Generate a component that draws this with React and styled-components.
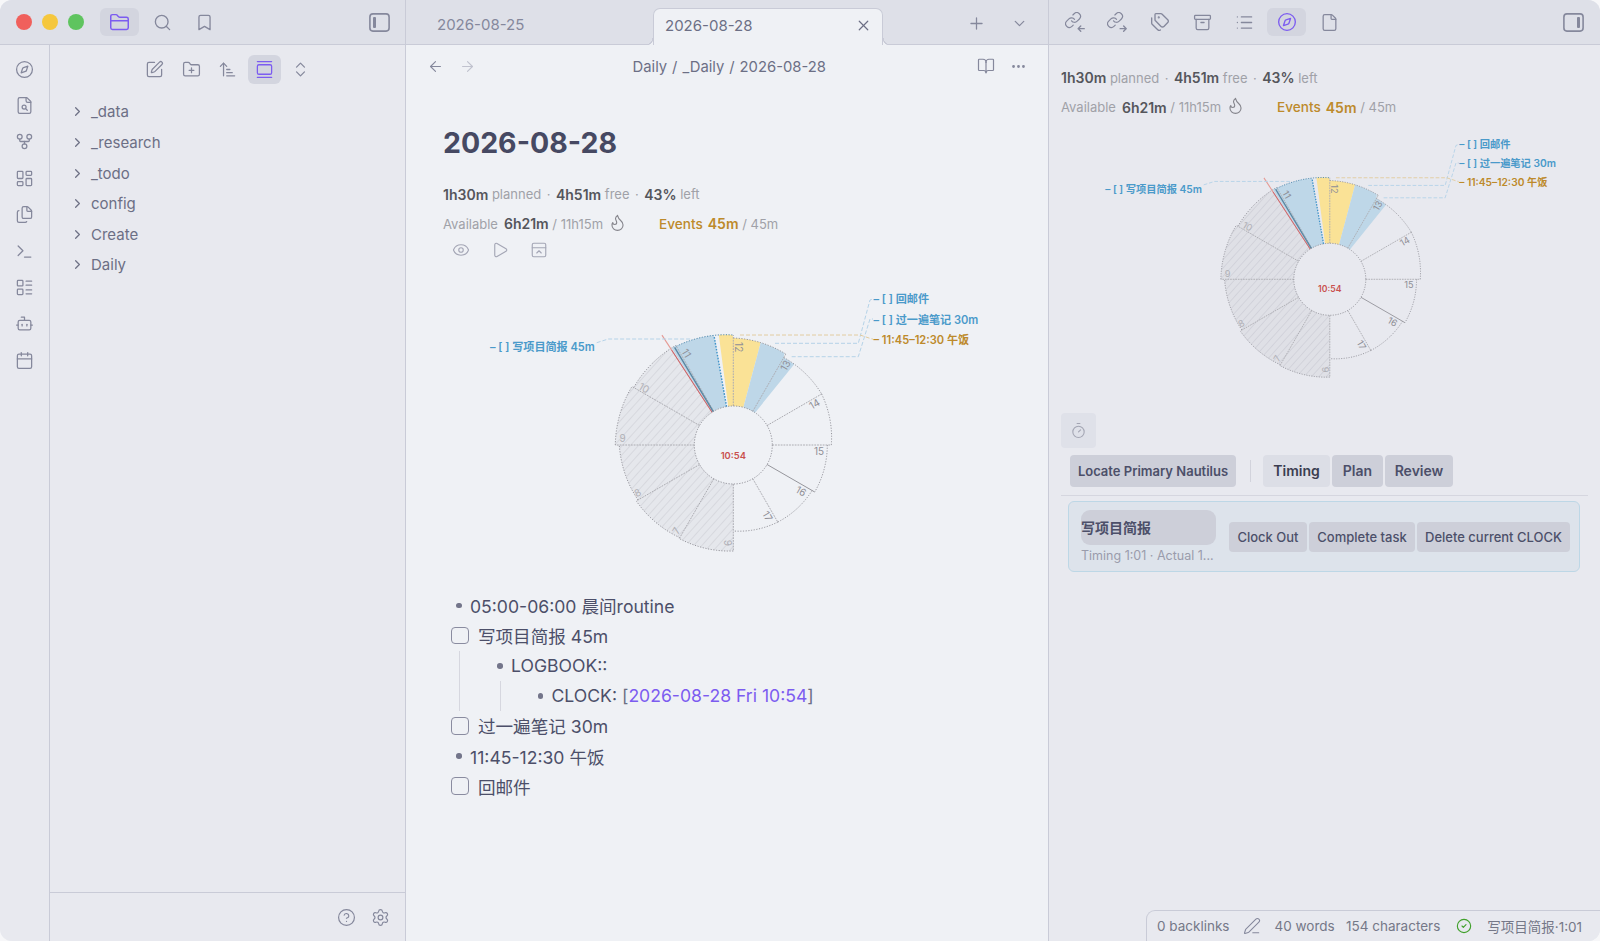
import React from 'react';
import styled, { createGlobalStyle } from 'styled-components';
import {
  FolderClosed, Search, Bookmark, Compass, GitFork, LayoutDashboard, Files, Terminal,
  LayoutList, Bot, Calendar, SquarePen, FolderPlus, ArrowUpNarrowWide, GalleryVertical, ChevronsUpDown,
  ChevronRight, ChevronDown, X, Plus, ArrowLeft, ArrowRight, BookOpen, Ellipsis, Flame, Eye, Play,
  PanelTopClose, Tags, Archive, List, File, Timer, PenLine, CircleCheck, CircleHelp, Settings,
} from 'lucide-react';

const Global = createGlobalStyle`
  html, body { margin: 0; padding: 0; background: #f7f7f9; }
  body { font-family: Inter, "Noto Sans CJK SC", sans-serif; overflow: hidden; }
  * { box-sizing: border-box; }
`;

const C = {
  base: '#eff1f5', side: '#e8e9ef', top: '#dee0e8', line: '#c9cbd7', surf: '#cdcfd9',
  text: '#4c4f69', sub: '#6c6f85', icon: '#85889c', purple: '#7c5cf0', amber: '#bd8a2b', blue: '#4a9aca',
};

const Win = styled.div`
  position: relative; display: flex; width: 1600px; height: 941px; overflow: hidden;
  border-radius: 12px; background: ${C.base};
`;
const LeftSplit = styled.div`display: flex; flex-direction: column; width: 406px; background: ${C.side}; border-right: 1px solid ${C.line};`;
const MainSplit = styled.div`display: flex; flex-direction: column; width: 643px; background: ${C.base}; border-right: 1px solid ${C.line};`;
const RightSplit = styled.div`display: flex; flex-direction: column; width: 551px; background: ${C.side};`;

const Header = styled.div`
  display: flex; align-items: center; flex: 0 0 45px; height: 45px; background: ${C.top};
  border-bottom: 1px solid ${C.line}; padding: ${p => p.$pad || '0'};
  gap: ${p => p.$gap || 0}px;
`;
const Lights = styled.div`display: flex; gap: 10px; margin-right: 12.5px; padding-left: 16px;`;
const Light = styled.span`width: 16px; height: 16px; border-radius: 50%; background: ${p => p.$c};`;
const IconBtn = styled.button`
  display: flex; align-items: center; justify-content: center; flex: none; padding: 0; border: 0;
  width: ${p => p.$w || 39}px; height: ${p => p.$h || 28}px; border-radius: 6px;
  background: ${p => (p.$on ? '#d3d5df' : 'transparent')};
  color: ${p => (p.$on ? C.purple : p.$c || C.icon)};
  margin-left: ${p => (p.$push ? 'auto' : '0')};
`;

const LeftBody = styled.div`display: flex; flex: 1; min-height: 0;`;
const Rail = styled.div`display: flex; flex-direction: column; align-items: center; flex: 0 0 50px; padding-top: 6px; border-right: 1px solid ${C.line};`;
const RailBtn = styled.div`display: flex; align-items: center; justify-content: center; height: 36.4px; width: 48px; color: ${C.icon};`;
const Side = styled.div`display: flex; flex-direction: column; flex: 1; min-width: 0;`;
const SideTools = styled.div`display: flex; justify-content: center; gap: 3.5px; padding-top: 10px;`;
const Tree = styled.div`flex: 1; padding-top: 12.6px;`;
const TreeRow = styled.div`
  display: flex; align-items: center; height: 30.6px; padding-left: 20px; gap: 6px;
  font-size: 15px; color: ${C.sub};
`;
const SideFoot = styled.div`display: flex; justify-content: flex-end; align-items: center; gap: 4px; height: 49px; padding-right: 10px; border-top: 1px solid ${C.line};`;

const Tabs = styled(Header)`align-items: flex-end; padding-right: 17px;`;
const Tab = styled.div`
  flex: 0 0 247px; height: 36px; display: flex; align-items: center; padding-left: 31px;
  padding-bottom: 3px; font-size: 15px; color: ${C.icon};
`;
const ActiveTab = styled.div`
  position: relative; flex: 0 0 230px; height: 37px; margin-bottom: -1px; display: flex; align-items: center;
  justify-content: space-between; padding: 0 10px 3px 11px; font-size: 15px; color: ${C.sub};
  background: ${C.base}; border: 1px solid ${C.line}; border-bottom: 0; border-radius: 7px 7px 0 0;
  &::before, &::after {
    content: ''; position: absolute; bottom: 0; width: 7px; height: 7px;
  }
  &::before { left: -8px; background: radial-gradient(circle at 0 0, transparent 6.2px, ${C.line} 6.4px, ${C.line} 7.3px, ${C.base} 7.5px); }
  &::after { right: -8px; background: radial-gradient(circle at 100% 0, transparent 6.2px, ${C.line} 6.4px, ${C.line} 7.3px, ${C.base} 7.5px); }
`;
const TabTools = styled.div`display: flex; align-items: center; gap: 19px; margin-left: auto; padding-bottom: 9px;`;
const Nav = styled.div`display: grid; grid-template-columns: 1fr auto 1fr; align-items: center; height: 42px; padding: 0 18px 0 17.5px;`;
const NavGroup = styled.div`display: flex; gap: 8px; justify-content: ${p => p.$end ? 'flex-end' : 'flex-start'};`;
const Crumbs = styled.div`display: flex; gap: 5px; margin-left: 5px; padding-top: 1px; font-size: 14.8px; color: ${C.sub};`;

const Note = styled.div`flex: 1; padding: 36px 0 0 37px;`;
const Title = styled.h1`margin: 0 0 21px; font-size: 28.5px; line-height: 40px; font-weight: 700; color: #464962;`;
const Stat = styled.div`
  display: flex; align-items: center; height: 20px; font-size: 13px; color: #a0a1a8; white-space: pre;
  margin-bottom: 9.5px;
`;
const B = styled.b`font-size: 14px; font-weight: 600; color: ${p => p.$c || '#55565c'};`;
const Amber = styled.span`font-size: 13.6px; font-weight: 500; margin-right: 5px; color: ${C.amber};`;
const Dot = styled.span`margin: 0 5.5px; color: #a0a1a8;`;
const Lead = styled.span`margin-right: 6px;`;
const FlameWrap = styled.span`display: flex; margin: -3px 32px 0 5px; color: #85858c;`;
const Tools = styled.div`display: flex; align-items: center; gap: 21px; height: 20px; padding-left: 9px; margin: -3px 0 20px; color: #a4a6b5;`;
const ChartSlot = styled.div`margin-left: 37px;`;

const Tasks = styled.div`margin-top: 20.5px; font-size: 17.6px; color: ${C.text};`;
const Row = styled.div`display: flex; align-items: center; height: 30.1px; padding-left: ${p => p.$pl || 0}px; white-space: pre;`;
const Marker = styled.span`display: flex; justify-content: flex-end; width: 27px; padding-right: 8.2px;`;
const Bullet = styled.i`display: block; width: 5.6px; height: 5.6px; border-radius: 50%; background: #73758a;`;
const Box = styled.span`
  flex: none; width: 17.5px; height: 17.5px; margin: 0 9px 0 8.4px; border: 1.3px solid #8a8ca0; border-radius: 4px;
`;
const Nest = styled.div`margin-left: ${p => p.$ml}px; border-left: 1px solid #d6d7df;`;
const Link = styled.span`color: ${C.purple};`;
const Bracket = styled.span`color: ${C.sub};`;

const Pane = styled.div`flex: 1; padding: 22.5px 0 0 12px;`;
const SideChart = styled.div`margin: 0 0 18.6px 34.5px; height: 267.7px;`;
const TimerBtn = styled.div`
  display: flex; align-items: center; justify-content: center; width: 35px; height: 35px; margin-bottom: 7px;
  border-radius: 4px; background: #dfe1e9; color: #a3a5b3;
`;
const ActionRow = styled.div`display: flex; align-items: center; gap: 2px; margin-left: 9px; height: 32px;`;
const Btn = styled.div`
  display: flex; align-items: center; justify-content: center; height: ${p => p.$h || 32}px; width: ${p => p.$w}px;
  border-radius: 4px; background: ${p => (p.$light ? '#dcdee6' : C.surf)}; white-space: nowrap;
  font-size: ${p => p.$fs || 13}px; font-weight: ${p => p.$fw || 600}; color: ${p => (p.$light ? '#3b3d50' : C.text)};
`;
const Sep = styled.span`width: 1px; height: 22px; margin: 0 10px 0 12px; background: #d2d3dc;`;
const Rule = styled.div`height: 1px; margin: 8px 12px 5px 0; background: #d5d6df;`;
const Card = styled.div`
  display: flex; align-items: center; width: 512px; height: 71px; margin-left: 7px; padding: 0 9px 0 12px;
  background: #dde3eb; border: 1px solid #bdd7e6; border-radius: 6px;
`;
const CardMain = styled.div`display: flex; flex-direction: column; width: 137px; margin: 2px 13px 0 0;`;
const CardTitle = styled.div`display: flex; align-items: center; height: 35px; padding-bottom: 2px; border-radius: 9px; background: ${C.surf}; font-size: 14px; font-weight: 600; color: ${C.text};`;
const CardSub = styled.div`margin-top: 2px; font-size: 12.5px; line-height: 17px; color: #9a9cab; white-space: nowrap;`;
const CardBtns = styled.div`display: flex; gap: 2px; margin-top: 2px;`;

const Status = styled.div`
  position: absolute; right: 0; bottom: 0; display: flex; align-items: center; width: 454px; height: 31px;
  padding-left: 10px; font-size: 13.5px; color: #757888; background: ${C.side};
  border-top: 1px solid ${C.line}; border-left: 1px solid ${C.line}; border-top-left-radius: 9px; white-space: pre;
`;
const StatusIcon = styled.span`display: flex; margin: ${p => p.$m}; color: ${p => p.$c || C.icon};`;

const LinkArrowIcon = ({ out }) => (
  <svg width="21" height="21" viewBox="0 0 24 24" fill="none" stroke="currentColor" strokeWidth="1.6" strokeLinecap="round" strokeLinejoin="round">
    <g transform="translate(-1 -1) scale(.85)">
      <path d="M10 13a5 5 0 0 0 7.54.54l3-3a5 5 0 0 0-7.07-7.07l-1.72 1.71" />
      <path d="M14 11a5 5 0 0 0-7.54-.54l-3 3a5 5 0 0 0 7.07 7.07l1.71-1.71" />
    </g>
    {out ? <path d="M15 19h7m-3-3 3 3-3 3" /> : <path d="M22 19h-7m3-3-3 3 3 3" />}
  </svg>
);
const SideToggle = ({ right }) => (
  <svg width="21" height="19" viewBox="0 0 21 19" fill="none">
    <rect x=".9" y=".9" width="19.2" height="17.2" rx="3" stroke="currentColor" strokeWidth="1.6" />
    <rect x={right ? 14 : 4} y="4" width="3" height="11" rx="1" fill="currentColor" />
  </svg>
);
const FileFind = ({ size, strokeWidth }) => (
  <svg width={size} height={size} viewBox="0 0 24 24" fill="none" stroke="currentColor" strokeWidth={strokeWidth} strokeLinecap="round" strokeLinejoin="round">
    <path d="M15 2H6a2 2 0 0 0-2 2v16a2 2 0 0 0 2 2h12a2 2 0 0 0 2-2V7Z" />
    <path d="M14 2v4a2 2 0 0 0 2 2h4" />
    <circle cx="11.5" cy="14" r="2.5" />
    <path d="m13.4 15.9 2.1 2.1" />
  </svg>
);

const CX = 253.3, CY = 165, RIN = 39;
const SECT = [[106, 108], [107, 112], [110, 114], [118, 117], [115, 115], [114, 110], [107, 105], [101, 102], [102, 98], [94, 94], [91, 89], [89, 86]];
const rOut = a => {
  const i = Math.min(11, Math.floor((a - 180) / 30));
  const t = (a - 180 - i * 30) / 30;
  return SECT[i][0] + (SECT[i][1] - SECT[i][0]) * t;
};
const pt = (a, r) => {
  const q = (a * Math.PI) / 180;
  return `${(CX + r * Math.sin(q)).toFixed(2)} ${(CY - r * Math.cos(q)).toFixed(2)}`;
};
const ring = (a0, a1, aIn1 = a1) => {
  const p = [`M${pt(a0, RIN)}`];
  const n = Math.max(2, Math.ceil(a1 - a0));
  for (let k = 0; k <= n; k++) {
    const a = Math.min(a0 + ((a1 - a0) * k) / n, a1 - 0.001);
    p.push(`L${pt(a, rOut(a))}`);
  }
  p.push(`L${pt(aIn1, RIN)}`);
  p.push(`A${RIN} ${RIN} 0 ${aIn1 - a0 > 180 ? 1 : 0} 0 ${pt(a0, RIN)}Z`);
  return p.join('');
};
const outerArc = (a0, a1) => {
  const p = [];
  for (let a = a0; a <= a1 - 1; a += 1) p.push(`${p.length ? 'L' : 'M'}${pt(a, rOut(a))}`);
  p.push(`L${pt(a1 - 0.01, rOut(a1 - 0.01))}`);
  return p.join('');
};
const HOUR_LABELS = [
  ['6', 183, 98, -90, 1], ['7', 213.8, 103, -60, 1], ['8', 243.6, 107, -30, 1], ['9', 273.4, 111, 0, 1],
  ['10', 302.8, 106, 30, 1], ['11', 333.2, 103, 60, 0], ['12', 3.3, 98, 90, 0], ['13', 33, 95, -60, 0],
  ['14', 63, 91, -30, 0], ['15', 94, 86, 0, 0], ['16', 124, 82, 30, 0], ['17', 154, 79, 60, 0],
];

const Nautilus = ({ scale = 1, id }) => {
  const hourAngles = Array.from({ length: 12 }, (_, i) => 180 + i * 30);
  return (
    <svg width={520 * scale} height={290 * scale} viewBox="0 0 520 290" style={{ display: 'block' }} fontFamily='Inter, "Noto Sans CJK SC", sans-serif'>
      <defs>
        <pattern id={id} width="6" height="6" patternUnits="userSpaceOnUse" patternTransform="rotate(42)">
          <rect width="6" height="6" fill="#80808f" fillOpacity=".085" />
          <line x1="0" y1="0" x2="0" y2="6" stroke="#80808f" strokeOpacity=".24" strokeWidth="1.2" />
        </pattern>
      </defs>
      <path d={ring(180, 327)} fill={`url(#${id})`} />
      <path d={ring(327.5, 350)} fill="#bed7e8" />
      <path d={ring(352.5, 375)} fill="#fae296" />
      <path d={ring(375, 397, 394)} fill="#bed7e8" />
      {hourAngles.map(a => (
        <path key={a} d={outerArc(a, a + 30)} fill="none" stroke={a === 330 ? '#4f88ac' : '#97979e'} strokeWidth="1" strokeDasharray="1.2 1.5" />
      ))}
      {hourAngles.map(a => {
        const i = (a - 180) / 30;
        const [x1, y1] = pt(a, RIN).split(' ');
        const [x2, y2] = pt(a, Math.max(SECT[i][0], SECT[(i + 11) % 12][1])).split(' ');
        return (
          <line key={a} x1={x1} y1={y1} x2={x2} y2={y2} stroke={a === 480 ? '#96969c' : '#acacb2'} strokeWidth="1" strokeDasharray={a === 480 ? 'none' : '1.8 1'} />
        );
      })}
      <circle cx={CX} cy={CY} r={RIN} fill="none" stroke="#8e8e96" strokeWidth="1" strokeDasharray="1.2 1.5" />
      <path d={`M${pt(327, RIN)}L${pt(327, 131)}`} stroke="#e59a94" strokeWidth="1.1" />
      <path d={`M${pt(327, RIN)}L${pt(327, 113)}`} stroke="#c2606a" strokeWidth=".9" />
      <path d={`M${pt(329, RIN)}L${pt(329, 114)}`} stroke="#5b87a2" strokeWidth="1.4" />
      <path d={`M${pt(350, RIN)}L${pt(350, 110)}`} stroke="#3f93c9" strokeWidth="1.4" strokeDasharray="1.6 1.4" />
      <g fill="none" strokeWidth="1" strokeDasharray="4 2">
        <path d="M116.7 62.7L128.3 59H211.7" stroke="#b5d3e8" />
        <path d="M295 63.3H378.3L390 20L393 19" stroke="#b5d3e8" />
        <path d="M311.7 76.7H378.3L390 39H393" stroke="#b5d3e8" />
        <path d="M260 55H380L392 59H393" stroke="#e2cca0" />
      </g>
      <g fontSize="11.1" fontWeight="600" dominantBaseline="central">
        <text x="10" y="66.7" fill={C.blue}>– [ ] 写项目简报 45m</text>
        <text x="393.5" y="18.8" fill={C.blue}>– [ ] 回邮件</text>
        <text x="393.5" y="39.5" fill={C.blue}>– [ ] 过一遍笔记 30m</text>
        <text x="393.5" y="59.5" fill={C.amber}>– 11:45–12:30 午饭</text>
      </g>
      {HOUR_LABELS.map(([t, a, r, rot, past]) => {
        const [x, y] = pt(a, r).split(' ');
        return (
          <text key={t} x={x} y={y} fontSize="10" textAnchor="middle" dominantBaseline="central" fill={past ? '#b0b0b6' : '#8f8f96'} transform={`rotate(${rot} ${x} ${y})`}>{t}</text>
        );
      })}
      <text x={CX} y={CY + 10.7} fontSize="9.4" fontWeight="600" textAnchor="middle" dominantBaseline="central" fill="#c9504e">10:54</text>
    </svg>
  );
};

const Stats = () => (
  <>
    <Stat>
      <B>1h30m</B> planned<Dot>·</Dot><B>4h51m</B> free<Dot>·</Dot><B>43%</B> left
    </Stat>
    <Stat>
      <Lead>Available</Lead><B>6h21m</B> / 11h15m
      <FlameWrap><Flame size={19} strokeWidth={1.4} /></FlameWrap>
      <Amber>Events</Amber><B $c={C.amber}>45m</B> / 45m
    </Stat>
  </>
);

const railIcons = [Compass, FileFind, GitFork, LayoutDashboard, Files, Terminal, LayoutList, Bot, Calendar];
const folders = ['_data', '_research', '_todo', 'config', 'Create', 'Daily'];

export default function App() {
  return (
    <Win>
      <Global />
      <LeftSplit>
        <Header $pad="0 6px 0 0" $gap={3.5}>
          <Lights>
            <Light $c="#f0605c" /><Light $c="#f5c73d" /><Light $c="#5fc45f" />
          </Lights>
          <IconBtn $on><FolderClosed size={21} strokeWidth={1.7} /></IconBtn>
          <IconBtn><Search size={19} strokeWidth={1.7} /></IconBtn>
          <IconBtn><Bookmark size={19} strokeWidth={1.7} /></IconBtn>
          <IconBtn $push><SideToggle /></IconBtn>
        </Header>
        <LeftBody>
          <Rail>
            {railIcons.map((I, i) => <RailBtn key={i}><I size={19} strokeWidth={1.6} /></RailBtn>)}
          </Rail>
          <Side>
            <SideTools>
              <IconBtn $w={33} $h={29}><SquarePen size={19} strokeWidth={1.6} /></IconBtn>
              <IconBtn $w={33} $h={29}><FolderPlus size={19} strokeWidth={1.6} /></IconBtn>
              <IconBtn $w={33} $h={29}><ArrowUpNarrowWide size={19} strokeWidth={1.6} /></IconBtn>
              <IconBtn $w={33} $h={29} $on><GalleryVertical size={19} strokeWidth={1.6} /></IconBtn>
              <IconBtn $w={33} $h={29}><ChevronsUpDown size={19} strokeWidth={1.6} /></IconBtn>
            </SideTools>
            <Tree>
              {folders.map(f => (
                <TreeRow key={f}><ChevronRight size={15} strokeWidth={2} color="#6f7286" />{f}</TreeRow>
              ))}
            </Tree>
            <SideFoot>
              <IconBtn $w={30}><CircleHelp size={19} strokeWidth={1.5} /></IconBtn>
              <IconBtn $w={30}><Settings size={19} strokeWidth={1.5} /></IconBtn>
            </SideFoot>
          </Side>
        </LeftBody>
      </LeftSplit>

      <MainSplit>
        <Tabs>
          <Tab>2026-08-25</Tab>
          <ActiveTab>2026-08-28<X size={17} strokeWidth={1.7} color="#6c6f85" /></ActiveTab>
          <TabTools>
            <IconBtn $w={24} $h={24}><Plus size={19} strokeWidth={1.6} /></IconBtn>
            <IconBtn $w={24} $h={24}><ChevronDown size={17} strokeWidth={1.7} /></IconBtn>
          </TabTools>
        </Tabs>
        <Nav>
          <NavGroup>
            <IconBtn $w={24} $h={24}><ArrowLeft size={17} strokeWidth={1.6} /></IconBtn>
            <IconBtn $w={24} $h={24} $c="#c0c2ce"><ArrowRight size={17} strokeWidth={1.6} /></IconBtn>
          </NavGroup>
          <Crumbs><span>Daily</span><span>/</span><span>_Daily</span><span>/</span><span>2026-08-28</span></Crumbs>
          <NavGroup $end>
            <IconBtn $w={24} $h={24}><BookOpen size={18} strokeWidth={1.6} /></IconBtn>
            <IconBtn $w={24} $h={24}><Ellipsis size={17} strokeWidth={2} /></IconBtn>
          </NavGroup>
        </Nav>
        <Note>
          <Title>2026-08-28</Title>
          <Stats />
          <Tools>
            <Eye size={18} strokeWidth={1.5} />
            <Play size={18} strokeWidth={1.5} />
            <PanelTopClose size={18} strokeWidth={1.5} />
          </Tools>
          <ChartSlot><Nautilus id="hatchMain" /></ChartSlot>
          <Tasks>
            <Row><Marker><Bullet /></Marker>05:00-06:00 晨间routine</Row>
            <Row><Box />写项目简报 45m</Row>
            <Nest $ml={16}>
              <Row $pl={24}><Marker><Bullet /></Marker>LOGBOOK::</Row>
              <Nest $ml={40}>
                <Row $pl={23.5}><Marker><Bullet /></Marker>CLOCK: <Bracket>[</Bracket><Link>2026-08-28 Fri 10:54</Link><Bracket>]</Bracket></Row>
              </Nest>
            </Nest>
            <Row><Box />过一遍笔记 30m</Row>
            <Row><Marker><Bullet /></Marker>11:45-12:30 午饭</Row>
            <Row><Box />回邮件</Row>
          </Tasks>
        </Note>
      </MainSplit>

      <RightSplit>
        <Header $pad="0 7.5px 0 7px" $gap={3.3}>
          <IconBtn><LinkArrowIcon /></IconBtn>
          <IconBtn><LinkArrowIcon out /></IconBtn>
          <IconBtn><Tags size={20} strokeWidth={1.6} /></IconBtn>
          <IconBtn><Archive size={19} strokeWidth={1.6} /></IconBtn>
          <IconBtn><List size={19} strokeWidth={1.6} /></IconBtn>
          <IconBtn $on><Compass size={20} strokeWidth={1.6} /></IconBtn>
          <IconBtn><File size={19} strokeWidth={1.6} /></IconBtn>
          <IconBtn $push><SideToggle right /></IconBtn>
        </Header>
        <Pane>
          <Stats />
          <SideChart><Nautilus scale={0.923} id="hatchSide" /></SideChart>
          <TimerBtn><Timer size={17} strokeWidth={1.5} /></TimerBtn>
          <ActionRow>
            <Btn $w={166}>Locate Primary Nautilus</Btn>
            <Sep />
            <Btn $w={67} $light $fs={14}>Timing</Btn>
            <Btn $w={51} $fs={14}>Plan</Btn>
            <Btn $w={68} $fs={14}>Review</Btn>
          </ActionRow>
          <Rule />
          <Card>
            <CardMain>
              <CardTitle>写项目简报</CardTitle>
              <CardSub>Timing 1:01 · Actual 1...</CardSub>
            </CardMain>
            <CardBtns>
              <Btn $w={78} $h={30} $fw={500}>Clock Out</Btn>
              <Btn $w={106} $h={30} $fw={500}>Complete task</Btn>
              <Btn $w={153} $h={30} $fw={500}>Delete current CLOCK</Btn>
            </CardBtns>
          </Card>
        </Pane>
      </RightSplit>

      <Status>
        0 backlinks
        <StatusIcon $m="0 13px 0 14px"><PenLine size={18} strokeWidth={1.4} /></StatusIcon>
        40 words   154 characters
        <StatusIcon $m="0 15px 0 16px" $c="#40a02b"><CircleCheck size={16} strokeWidth={1.7} /></StatusIcon>
        写项目简报·1:01
      </Status>
    </Win>
  );
}
